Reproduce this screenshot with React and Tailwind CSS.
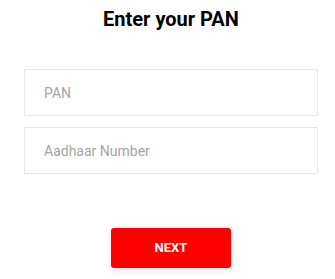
import React from "react";

export default function App() {
  return (
    <div
      className="w-[335px] h-[279px] bg-white pl-[24px] pr-[17px]"
      style={{ fontFamily: "Roboto, sans-serif" }}
    >
      <h1 className="pt-[5px] text-center text-[20px] leading-[28px] font-bold text-black">
        Enter your PAN
      </h1>

      <div className="mt-[36px] flex flex-col gap-[11px]">
        <input
          type="text"
          placeholder="PAN"
          className="h-[47px] w-full border border-[#e6e6e6] px-[19px] text-[14px] text-[#333] placeholder:text-[#a4a4a4] outline-none"
        />
        <input
          type="text"
          placeholder="Aadhaar Number"
          className="h-[47px] w-full border border-[#e6e6e6] px-[19px] text-[14px] text-[#333] placeholder:text-[#a4a4a4] outline-none"
        />
      </div>

      <div className="mt-[54px] flex justify-center">
        <button className="h-[40px] w-[120px] rounded-[3px] bg-[#ff0000] text-[13px] font-bold text-white shadow-[0_2px_8px_rgba(0,0,0,0.12)]">
          NEXT
        </button>
      </div>
    </div>
  );
}
